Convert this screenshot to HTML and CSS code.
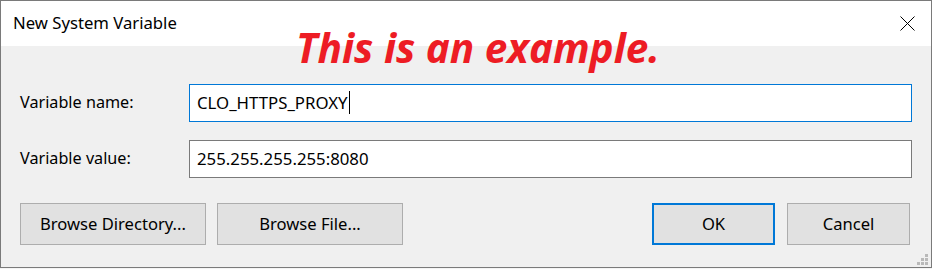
FILE: index.html
```html
<!DOCTYPE html>
<html lang="en">

<head>
  <meta charset="UTF-8">
  <title>New System Variable</title>
  <link rel="stylesheet" href="styles.css">
</head>

<body>
  <div class="window">
    <div class="titlebar">
      <span class="title">New System Variable</span>
      <svg class="close" width="15" height="15" viewBox="0 0 15 15">
        <path d="M0.5 0.5 L14.5 14.5 M14.5 0.5 L0.5 14.5" stroke="#000" stroke-width="1" fill="none" />
      </svg>
    </div>

    <div class="content">
      <div class="form">
        <label class="label">Variable name:</label>
        <div class="field focused">CLO_HTTPS_PROXY<span class="caret"></span></div>

        <label class="label">Variable value:</label>
        <div class="field">255.255.255.255:8080</div>
      </div>

      <div class="buttons">
        <button class="btn wide">Browse Directory...</button>
        <button class="btn wide">Browse File...</button>
        <span class="spacer"></span>
        <button class="btn default">OK</button>
        <button class="btn">Cancel</button>
      </div>

      <!-- resize grip -->
      <svg class="grip" width="12" height="12" viewBox="0 0 12 12">
        <rect x="8" y="0" width="3" height="3" fill="#b9b9b9" />
        <rect x="4" y="4" width="3" height="3" fill="#b9b9b9" />
        <rect x="8" y="4" width="3" height="3" fill="#b9b9b9" />
        <rect x="0" y="8" width="3" height="3" fill="#b9b9b9" />
        <rect x="4" y="8" width="3" height="3" fill="#b9b9b9" />
        <rect x="8" y="8" width="3" height="3" fill="#b9b9b9" />
      </svg>
    </div>

    <div class="stamp">This is an example.</div>
  </div>
</body>

</html>
```

FILE: styles.css
```css
* {
  margin: 0;
  padding: 0;
  box-sizing: border-box;
}

body {
  font-family: 'Noto Sans', 'Open Sans', sans-serif;
  background: #f4f4f4;
  width: 932px;
  height: 269px;
  overflow: hidden;
}

.window {
  position: relative;
  width: 932px;
  height: 268px;
  border: 1px solid #7a7a7a;
  background: #f0f0f0;
  display: flex;
  flex-direction: column;
}

.titlebar {
  height: 45px;
  background: #ffffff;
  display: flex;
  align-items: center;
  padding-left: 12px;
  padding-right: 16px;
  flex-shrink: 0;
}

.title {
  font-size: 16.7px;
  color: #000;
  flex: 1;
  padding-bottom: 2px;
}

.close {
  display: block;
}

.content {
  position: relative;
  flex: 1;
  padding: 38px 19px 0 19px;
}

.form {
  display: grid;
  grid-template-columns: 169px 1fr;
  row-gap: 18px;
  align-items: center;
}

.label {
  font-size: 16.2px;
  color: #000;
  padding-bottom: 2px;
}

.field {
  height: 38px;
  background: #fff;
  border: 1px solid #7a7a7a;
  font-size: 16.8px;
  color: #000;
  padding-left: 7px;
  display: flex;
  align-items: center;
  padding-bottom: 2px;
}

.field.focused {
  border-color: #0078d7;
}

.caret {
  display: inline-block;
  width: 1px;
  height: 23px;
  background: #000;
  margin-left: 1px;
}

.buttons {
  display: flex;
  margin-top: 25px;
  margin-right: 2px;
}

.btn {
  font-family: inherit;
  font-size: 16.6px;
  color: #000;
  height: 42px;
  width: 123px;
  background: #e1e1e1;
  border: 1px solid #adadad;
  padding-bottom: 2px;
}

.btn.wide {
  width: 186px;
  margin-right: 11px;
}

.btn.default {
  border: 2px solid #0078d7;
  margin-right: 12px;
}

.spacer {
  flex: 1;
}

.grip {
  position: absolute;
  right: 2px;
  bottom: 1px;
}

/* red overlay text drawn over the dialog */
.stamp {
  position: absolute;
  left: 295px;
  top: 19px;
  font-size: 40.5px;
  font-weight: bold;
  font-style: italic;
  color: #ed1c24;
  white-space: nowrap;
}
```
